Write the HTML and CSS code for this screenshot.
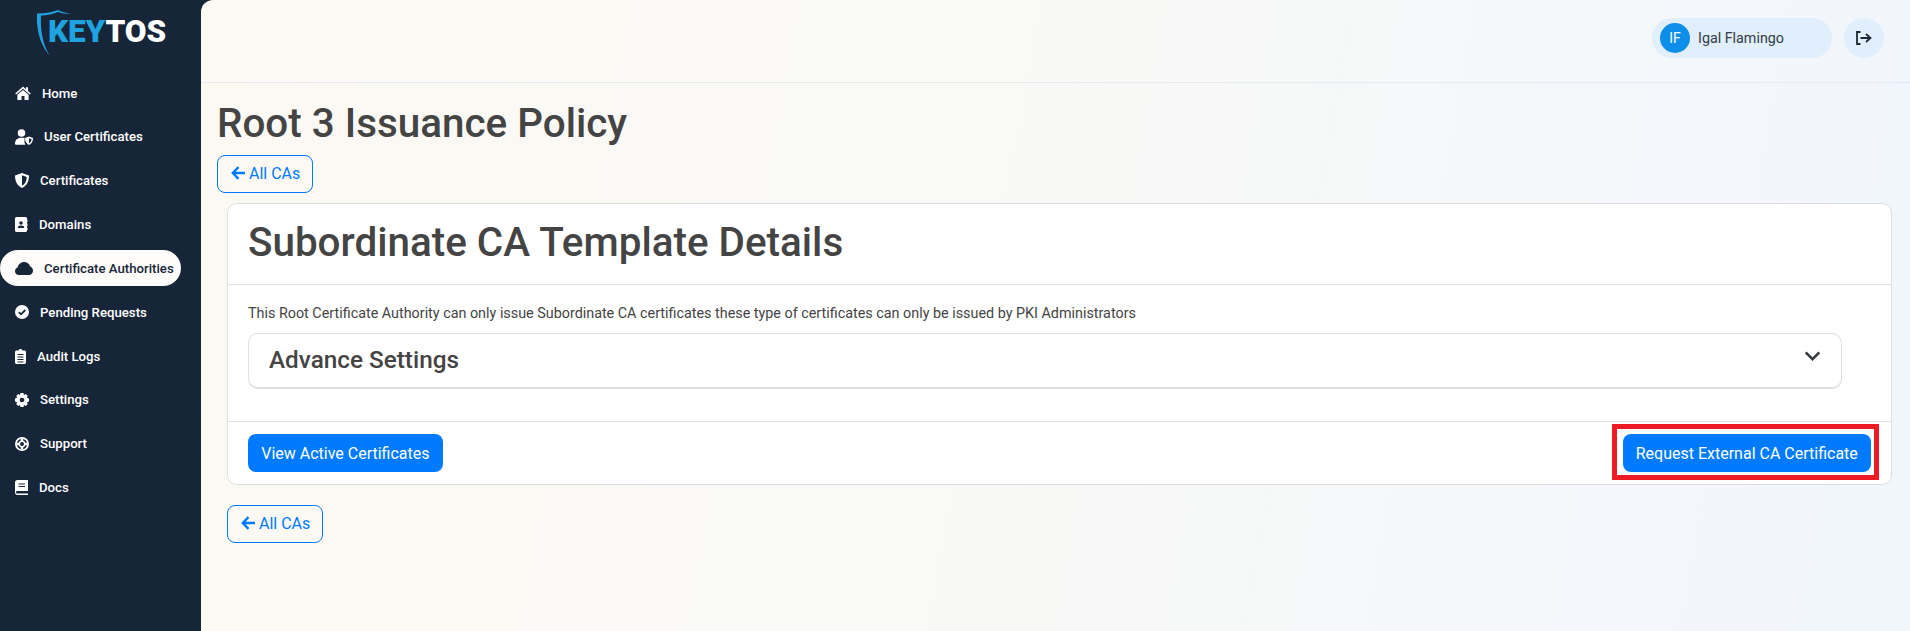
FILE: index.html
```html
<!DOCTYPE html>
<html lang="en">
<head>
<meta charset="utf-8">
<title>Root 3 Issuance Policy</title>
<link rel="stylesheet" href="styles.css">
</head>
<body>
<div class="app">
  <aside class="sidebar">
    <div class="logo">
      <svg class="logo-shield" width="40" height="50" viewBox="0 0 40 50"><path d="M1 4.500 C8 4.500 16 3.500 22 1 C26 3 31 4.500 36 5 C30 5 26 4.500 22 3 C17 5 11 6.500 5 6.500 C4 24 8 38 14 47 C6 38 0 24 1 4.500 Z" fill="#1fa3e0"/></svg>
      <span class="logo-text"><span class="logo-key">KEY</span>TOS</span>
    </div>
    <nav class="nav">
      <a class="nav-item"><svg width="16" height="14" viewBox="0 0 16 14"><path d="M8 0.600 L0.200 7.400 1.200 8.600 8 2.800 14.800 8.600 15.800 7.400 13 5 V1.200 H11 V3.200 Z M2.400 8.800 V14 H6.500 V10 H9.500 V14 H13.600 V8.800 L8 4 Z" fill="#fff"/></svg>Home</a>
      <a class="nav-item"><svg width="18" height="16" viewBox="0 0 18 16"><circle cx="6.500" cy="4" r="3.800" fill="#fff"/><path d="M0 15 C0 11 2.500 8.800 6 8.800 H9.500 V13 C9.500 14 10 15 10.500 15.800 H1 C.4 15.800 0 15.500 0 15 Z" fill="#fff"/><path d="M14 7.500 L18 9 C18 12 17 14.500 14 16 C11 14.500 10 12 10 9 Z" fill="#fff"/><path d="M14 9.200 L16.500 10 C16.400 12 15.700 13.500 14 14.400 Z" fill="#172538"/></svg>User Certificates</a>
      <a class="nav-item"><svg width="14" height="15" viewBox="0 0 14 15"><path d="M7 0 L14 2.500 C14 8 12 12.500 7 15 C2 12.500 0 8 0 2.500 Z" fill="#fff"/><path d="M7 2.200 L11.800 3.900 C11.600 7.800 10.200 11 7 12.800 Z" fill="#172538"/></svg>Certificates</a>
      <a class="nav-item"><svg width="13" height="15" viewBox="0 0 13 15"><path d="M1.500 0 H10.500 C11.300 0 12 .7 12 1.500 V13.500 C12 14.300 11.300 15 10.500 15 H1.500 C.7 15 0 14.300 0 13.500 V1.500 C0 .7 .7 0 1.500 0 Z" fill="#fff"/><circle cx="6" cy="6" r="1.800" fill="#172538"/><path d="M2.800 11 C2.800 9.300 4 8.600 6 8.600 S9.200 9.300 9.200 11 Z" fill="#172538"/><path d="M12.500 2.500 H13 V5 H12.500 Z M12.500 6.500 H13 V9 H12.500 Z M12.500 10.500 H13 V13 H12.500 Z" fill="#fff"/></svg>Domains</a>
      <a class="nav-item is-active"><svg width="18" height="14" viewBox="0 0 18 14"><path d="M4 14 C1.800 14 0 12.300 0 10.200 C0 8.600 1 7.200 2.600 6.600 C3 3.500 5.800 1 9.200 1 C12 1 14.300 2.800 15 5.300 C16.800 6 18 7.800 18 9.800 C18 12.200 16.200 14 14 14 Z" fill="#172538"/></svg>Certificate Authorities</a>
      <a class="nav-item"><svg width="14" height="14" viewBox="0 0 14 14"><circle cx="7" cy="7" r="7" fill="#fff"/><path d="M3.800 7.200 L6 9.300 10.300 5" fill="none" stroke="#172538" stroke-width="1.800"/></svg>Pending Requests</a>
      <a class="nav-item"><svg width="11" height="15" viewBox="0 0 11 15"><path d="M3.500 1.500 C3.700 .6 4.500 0 5.500 0 S7.300 .6 7.500 1.500 H9.500 C10.300 1.500 11 2.200 11 3 V13.500 C11 14.300 10.300 15 9.500 15 H1.500 C.7 15 0 14.300 0 13.500 V3 C0 2.200 .7 1.500 1.500 1.500 Z" fill="#fff"/><path d="M2.500 5.500 H8.500 M2.500 8 H8.500 M2.500 10.500 H8.500 M2.500 13 H8.500" stroke="#172538" stroke-width="1"/></svg>Audit Logs</a>
      <a class="nav-item"><svg width="14" height="14" viewBox="0 0 14 14"><path d="M5.500 0 H8.500 L9 2 10.800 1 12.800 3 11.800 4.800 14 5.500 V8.500 L11.800 9.200 12.800 11 10.800 13 9 12 8.500 14 H5.500 L5 12 3.200 13 1.200 11 2.200 9.200 0 8.500 V5.500 L2.200 4.800 1.200 3 3.200 1 5 2 Z" fill="#fff"/><circle cx="7" cy="7" r="2.300" fill="#172538"/></svg>Settings</a>
      <a class="nav-item"><svg width="14" height="14" viewBox="0 0 14 14"><circle cx="7" cy="7" r="7" fill="#fff"/><circle cx="7" cy="7" r="5.200" fill="#172538"/><path d="M7 2 V12 M2 7 H12" stroke="#fff" stroke-width="2.400"/><circle cx="7" cy="7" r="3.400" fill="#fff"/><circle cx="7" cy="7" r="2" fill="#172538"/></svg>Support</a>
      <a class="nav-item"><svg width="13" height="15" viewBox="0 0 13 15"><path d="M2.500 0 H13 V11 H2.500 C1.700 11 1 11.500 1 12.300 S1.700 13.500 2.500 13.500 H13 V15 H2.500 C1 15 0 14 0 12.500 V2.500 C0 1 1 0 2.500 0 Z" fill="#fff"/><path d="M3.500 4 H10 M3.500 6.500 H10" stroke="#172538" stroke-width="1.100"/></svg>Docs</a>
    </nav>
  </aside>
  <div class="main">
    <header class="topbar">
      <div class="user-pill"><span class="avatar">IF</span><span class="user-name">Igal Flamingo</span></div>
      <button class="logout" aria-label="Sign out"><svg width="16" height="14" viewBox="0 0 16 14"><path d="M4.500 1 H1 V13 H4.500" fill="none" stroke="#1f2937" stroke-width="1.800"/><path d="M4.500 7 H14 M10 3 L14.500 7 10 11" fill="none" stroke="#1f2937" stroke-width="1.800"/></svg></button>
    </header>
    <main class="content">
      <h1 class="page-title">Root 3 Issuance Policy</h1>
      <a class="btn-outline"><svg width="15" height="14" viewBox="0 0 15 14"><path d="M14 7 H2 M7.500 1.200 L1.800 7 7.500 12.800" fill="none" stroke="#007bff" stroke-width="2.400"/></svg>All CAs</a>
      <section class="card">
        <div class="card-header"><h2 class="card-title">Subordinate CA Template Details</h2></div>
        <div class="card-body">
          <p class="card-text">This Root Certificate Authority can only issue Subordinate CA certificates these type of certificates can only be issued by PKI Administrators</p>
          <div class="accordion">
            <span class="accordion-title">Advance Settings</span>
            <svg class="chevron" width="17" height="10" viewBox="0 0 18 11"><path d="M1.500 1.500 L9 9 16.500 1.500" fill="none" stroke="#343a40" stroke-width="2.800"/></svg>
          </div>
        </div>
        <div class="card-footer">
          <a class="btn-primary">View Active Certificates</a>
          <a class="btn-primary">Request External CA Certificate<span class="highlight"></span></a>
        </div>
      </section>
      <a class="btn-outline btn-bottom"><svg width="15" height="14" viewBox="0 0 15 14"><path d="M14 7 H2 M7.500 1.200 L1.800 7 7.500 12.800" fill="none" stroke="#007bff" stroke-width="2.400"/></svg>All CAs</a>
    </main>
  </div>
</div>
</body>
</html>
```
FILE: styles.css
```css
* { box-sizing: border-box; }
html, body { margin: 0; height: 100%; }
body { font-family: Roboto, "Liberation Sans", sans-serif; background: #172538; overflow: hidden; }
.app { display: flex; height: 631px; }
.sidebar { width: 201px; flex: none; background: #172538; color: #fff; }
.logo { position: relative; height: 75px; padding: 14px 0 0 48px; }
.logo-shield { position: absolute; left: 36px; top: 9px; }
.logo-text { font-size: 31.500px; font-weight: 900; line-height: 36px; color: #fff; letter-spacing: -.1px; }
.logo-key { color: #1fa3e0; }
.nav { display: flex; flex-direction: column; gap: 7.850px; }
.nav-item { display: flex; align-items: center; gap: 11px; height: 36px; width: 181px; padding-left: 15px; font-size: 13.200px; font-weight: 500; color: #fff; border-radius: 0 18px 18px 0; }
.nav-item svg { flex: none; }
.is-active { background: #fdfcfa; color: #172538; border-radius: 18px; }
.main { flex: 1; border-top-left-radius: 12px; background: linear-gradient(100deg, #fcf9f3 0%, #f9f9f6 45%, #f1f6fd 100%); display: flex; flex-direction: column; min-width: 0; }
.topbar { height: 83px; flex: none; border-bottom: 1px solid #e6eaf5; display: flex; align-items: center; justify-content: flex-end; gap: 12px; padding: 0 26px 6px 0; }
.user-pill { width: 180px; height: 40px; border-radius: 20px; background: #e1eefb; display: flex; align-items: center; gap: 8px; padding-left: 8px; }
.avatar { width: 30px; height: 30px; border-radius: 50%; background: #0d8ee9; color: #fff; font-size: 14px; display: flex; align-items: center; justify-content: center; }
.user-name { font-size: 14.300px; color: #333c48; }
.logout { width: 40px; height: 40px; border: 0; padding: 0; border-radius: 50%; background: #e1eefb; display: flex; align-items: center; justify-content: center; }
.content { padding: 17px 18px 0 16px; display: flex; flex-direction: column; align-items: flex-start; }
.page-title { margin: 0 0 7px; font-size: 40.400px; font-weight: 500; line-height: 48px; color: #444; }
.btn-outline { display: inline-flex; align-items: center; gap: 3px; height: 38px; padding: 0 12px 2px 13px; border: 1px solid #007bff; border-radius: 8px; font-size: 16px; color: #007bff; }
.btn-bottom { margin: 20px 0 0 10px; }
.card { width: 1665px; margin: 10px 0 0 10px; height: 282px; background: #fff; border: 1px solid #dfdfdf; border-radius: 10px; }
.card-header { height: 81px; border-bottom: 1px solid #dfdfdf; padding: 0 20px 3px; display: flex; align-items: center; }
.card-title { margin: 0; font-size: 40.400px; font-weight: 500; color: #444; }
.card-body { height: 137px; border-bottom: 1px solid #dfdfdf; padding: 19px 20px 0; }
.card-text { margin: 0 0 9px; font-size: 14.350px; line-height: 20px; color: #444; }
.accordion { width: 1594px; height: 56px; border: 1px solid #dfdfdf; border-bottom-width: 2px; border-radius: 10px; display: flex; justify-content: space-between; padding: 12px 20px 0; }
.accordion-title { font-size: 24.300px; font-weight: 500; line-height: 28px; color: #444; }
.chevron { margin: 5px 0 0 0; }
.card-footer { display: flex; justify-content: space-between; padding: 12px 20px 0; }
.btn-primary { position: relative; display: inline-flex; align-items: center; height: 38px; padding: 0 13.200px; background: #007bff; border-radius: 8px; color: #fff; font-size: 16px; font-weight: 400; }
.highlight { position: absolute; left: -11px; right: -8px; top: -10px; bottom: -8px; border: 5px solid #ed1c24; }
```
